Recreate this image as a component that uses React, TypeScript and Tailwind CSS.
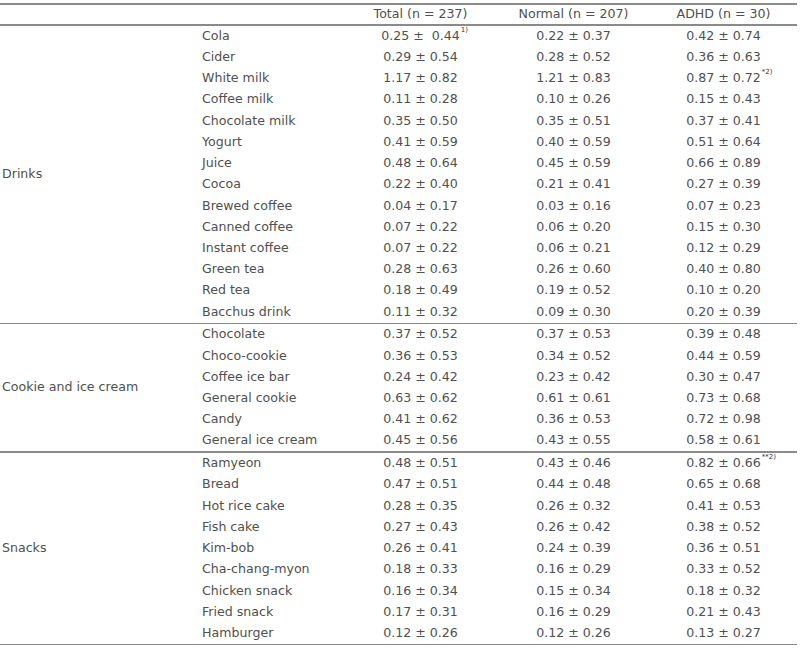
import React from "react";

type Row = [string, string, string, string, string?, string?];

const sections: { name: string; rows: Row[] }[] = [
  {
    name: "Drinks",
    rows: [
      ["Cola", "0.25 ±  0.44", "0.22 ± 0.37", "0.42 ± 0.74", "1)"],
      ["Cider", "0.29 ± 0.54", "0.28 ± 0.52", "0.36 ± 0.63"],
      ["White milk", "1.17 ± 0.82", "1.21 ± 0.83", "0.87 ± 0.72", undefined, "*2)"],
      ["Coffee milk", "0.11 ± 0.28", "0.10 ± 0.26", "0.15 ± 0.43"],
      ["Chocolate milk", "0.35 ± 0.50", "0.35 ± 0.51", "0.37 ± 0.41"],
      ["Yogurt", "0.41 ± 0.59", "0.40 ± 0.59", "0.51 ± 0.64"],
      ["Juice", "0.48 ± 0.64", "0.45 ± 0.59", "0.66 ± 0.89"],
      ["Cocoa", "0.22 ± 0.40", "0.21 ± 0.41", "0.27 ± 0.39"],
      ["Brewed coffee", "0.04 ± 0.17", "0.03 ± 0.16", "0.07 ± 0.23"],
      ["Canned coffee", "0.07 ± 0.22", "0.06 ± 0.20", "0.15 ± 0.30"],
      ["Instant coffee", "0.07 ± 0.22", "0.06 ± 0.21", "0.12 ± 0.29"],
      ["Green tea", "0.28 ± 0.63", "0.26 ± 0.60", "0.40 ± 0.80"],
      ["Red tea", "0.18 ± 0.49", "0.19 ± 0.52", "0.10 ± 0.20"],
      ["Bacchus drink", "0.11 ± 0.32", "0.09 ± 0.30", "0.20 ± 0.39"],
    ],
  },
  {
    name: "Cookie and ice cream",
    rows: [
      ["Chocolate", "0.37 ± 0.52", "0.37 ± 0.53", "0.39 ± 0.48"],
      ["Choco-cookie", "0.36 ± 0.53", "0.34 ± 0.52", "0.44 ± 0.59"],
      ["Coffee ice bar", "0.24 ± 0.42", "0.23 ± 0.42", "0.30 ± 0.47"],
      ["General cookie", "0.63 ± 0.62", "0.61 ± 0.61", "0.73 ± 0.68"],
      ["Candy", "0.41 ± 0.62", "0.36 ± 0.53", "0.72 ± 0.98"],
      ["General ice cream", "0.45 ± 0.56", "0.43 ± 0.55", "0.58 ± 0.61"],
    ],
  },
  {
    name: "Snacks",
    rows: [
      ["Ramyeon", "0.48 ± 0.51", "0.43 ± 0.46", "0.82 ± 0.66", undefined, "**2)"],
      ["Bread", "0.47 ± 0.51", "0.44 ± 0.48", "0.65 ± 0.68"],
      ["Hot rice cake", "0.28 ± 0.35", "0.26 ± 0.32", "0.41 ± 0.53"],
      ["Fish cake", "0.27 ± 0.43", "0.26 ± 0.42", "0.38 ± 0.52"],
      ["Kim-bob", "0.26 ± 0.41", "0.24 ± 0.39", "0.36 ± 0.51"],
      ["Cha-chang-myon", "0.18 ± 0.33", "0.16 ± 0.29", "0.33 ± 0.52"],
      ["Chicken snack", "0.16 ± 0.34", "0.15 ± 0.34", "0.18 ± 0.32"],
      ["Fried snack", "0.17 ± 0.31", "0.16 ± 0.29", "0.21 ± 0.43"],
      ["Hamburger", "0.12 ± 0.26", "0.12 ± 0.26", "0.13 ± 0.27"],
    ],
  },
];

function Val({ v, sup }: { v: string; sup?: string }) {
  return (
    <span className="relative whitespace-pre">
      {v}
      {sup && (
        <span className="absolute left-full top-[-3px] text-[7px] leading-none pl-[1px] text-[#333]">
          {sup}
        </span>
      )}
    </span>
  );
}

const Line = () => <div className="h-[1.5px] bg-[#8a8a8a]" />;

export default function App() {
  return (
    <div
      className="bg-white w-[802px] h-[648px] pt-[3px] text-[#505050] text-[12.6px] leading-none"
      style={{ fontFamily: '"DejaVu Sans", sans-serif' }}
    >
      <div className="w-[797px]">
        <Line />
        <div className="grid grid-cols-[200px_144px_153px_153px_147px] h-[19.5px] items-center">
          <div />
          <div />
          <div className="text-center">Total (n = 237)</div>
          <div className="text-center">Normal (n = 207)</div>
          <div className="text-center">ADHD (n = 30)</div>
        </div>
        <Line />
        {sections.map((s) => (
          <div key={s.name}>
            <div className="grid grid-cols-[200px_144px_153px_153px_147px]">
              <div
                className="flex items-center pl-[2px]"
                style={{ gridRow: `1 / span ${s.rows.length}` }}
              >
                {s.name}
              </div>
              {s.rows.map((r) => (
                <React.Fragment key={r[0]}>
                  <div className="h-[21.22px] flex items-center pl-[2px] col-start-2">{r[0]}</div>
                  <div className="h-[21.22px] flex items-center justify-center">
                    <Val v={r[1]} sup={r[4]} />
                  </div>
                  <div className="h-[21.22px] flex items-center justify-center">
                    <Val v={r[2]} />
                  </div>
                  <div className="h-[21.22px] flex items-center justify-center">
                    <Val v={r[3]} sup={r[5]} />
                  </div>
                </React.Fragment>
              ))}
            </div>
            <Line />
          </div>
        ))}
      </div>
    </div>
  );
}
